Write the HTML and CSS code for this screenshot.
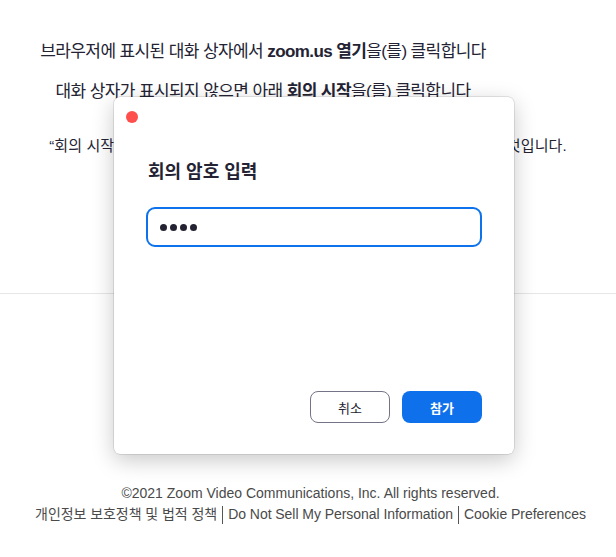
FILE: index.html
```html
<!DOCTYPE html>
<html lang="ko">
<head>
<meta charset="utf-8">
<link rel="stylesheet" href="styles.css">
</head>
<body>
<div class="page">
  <div class="intro">
    <p class="line1">브라우저에 표시된 대화 상자에서 <b>zoom.us 열기</b>을(를) 클릭합니다</p>
    <p class="line2">대화 상자가 표시되지 않으면 아래 <b>회의 시작</b>을(를) 클릭합니다</p>
  </div>
  <p class="terms">“회의 시작”을(를) 클릭하면 서비스 약관 및 개인정보처리방침에 동의하는 것입니다.</p>
  <div class="rule"></div>
  <footer class="footer">
    <p class="copy">©2021 Zoom Video Communications, Inc. All rights reserved.</p>
    <p class="links"><span>개인정보 보호정책 및 법적 정책</span><span class="sep"></span><span>Do Not Sell My Personal Information</span><span class="sep"></span><span>Cookie Preferences</span></p>
  </footer>
</div>
<div class="dialog">
  <span class="close-dot"></span>
  <h1 class="title">회의 암호 입력</h1>
  <div class="input"><span class="dot"></span><span class="dot"></span><span class="dot"></span><span class="dot"></span></div>
  <div class="actions">
    <button class="btn cancel">취소</button>
    <button class="btn join">참가</button>
  </div>
</div>
</body>
</html>
```
FILE: styles.css
```css
html, body {
  margin: 0;
  padding: 0;
  background: #fff;
}
body {
  font-family: "Liberation Sans", "Noto Sans CJK KR", sans-serif;
  color: #232333;
  width: 616px;
  height: 557px;
  overflow: hidden;
  position: relative;
}
.page {
  display: flex;
  flex-direction: column;
  padding-top: 39px;
}
.intro {
  padding-right: 90px;
  text-align: center;
}
.intro p {
  margin: 0;
  font-size: 17px;
  letter-spacing: -0.6px;
  line-height: 26px;
}
.intro .line2 {
  margin-top: 14px;
}
.intro b {
  font-weight: 700;
}
.terms {
  margin: 31px 0 0;
  text-align: center;
  font-size: 15px;
  letter-spacing: 0.1px;
  line-height: 20px;
}
.rule {
  margin-top: 137px;
  height: 1px;
  background: #e6e6e6;
}
.footer {
  margin-top: 189px;
  padding-left: 5px;
  text-align: center;
  color: #4a4a4a;
  font-size: 14px;
  line-height: 21px;
}
.footer p {
  margin: 0;
}
.links {
  display: flex;
  justify-content: center;
  align-items: center;
  gap: 5px;
  letter-spacing: -0.05px;
}
.sep {
  display: inline-block;
  width: 1px;
  height: 18px;
  background: #555;
}
.dialog {
  position: absolute;
  left: 114px;
  top: 97px;
  width: 400px;
  height: 357px;
  box-sizing: border-box;
  background: #fff;
  border-radius: 6px;
  box-shadow: 0 0 0 0.5px rgba(0,0,0,0.18), 0 6px 22px rgba(0,0,0,0.22);
  padding: 63px 32px 0;
}
.close-dot {
  position: absolute;
  left: 12px;
  top: 14px;
  width: 12px;
  height: 12px;
  border-radius: 50%;
  background: #fe4f4c;
}
.title {
  margin: 0;
  font-size: 18px;
  line-height: 24px;
  font-weight: 700;
  color: #232333;
  padding-left: 2px;
}
.input {
  margin-top: 23px;
  height: 40px;
  box-sizing: border-box;
  border: 2px solid #0e72ed;
  border-radius: 9px;
  display: flex;
  align-items: center;
  gap: 3px;
  padding-left: 12px;
}
.dot {
  width: 7px;
  height: 7px;
  border-radius: 50%;
  background: #232333;
}
.actions {
  margin-top: 144px;
  display: flex;
  justify-content: flex-end;
  gap: 12px;
}
.btn {
  width: 80px;
  height: 32px;
  border-radius: 8px;
  font-family: "Liberation Sans", "Noto Sans CJK KR", sans-serif;
  font-size: 13px;
  padding: 0;
}
.cancel {
  background: #fff;
  border: 1px solid #747487;
  color: #232333;
}
.join {
  background: #0e71eb;
  border: none;
  color: #fff;
  font-weight: 700;
}
```
